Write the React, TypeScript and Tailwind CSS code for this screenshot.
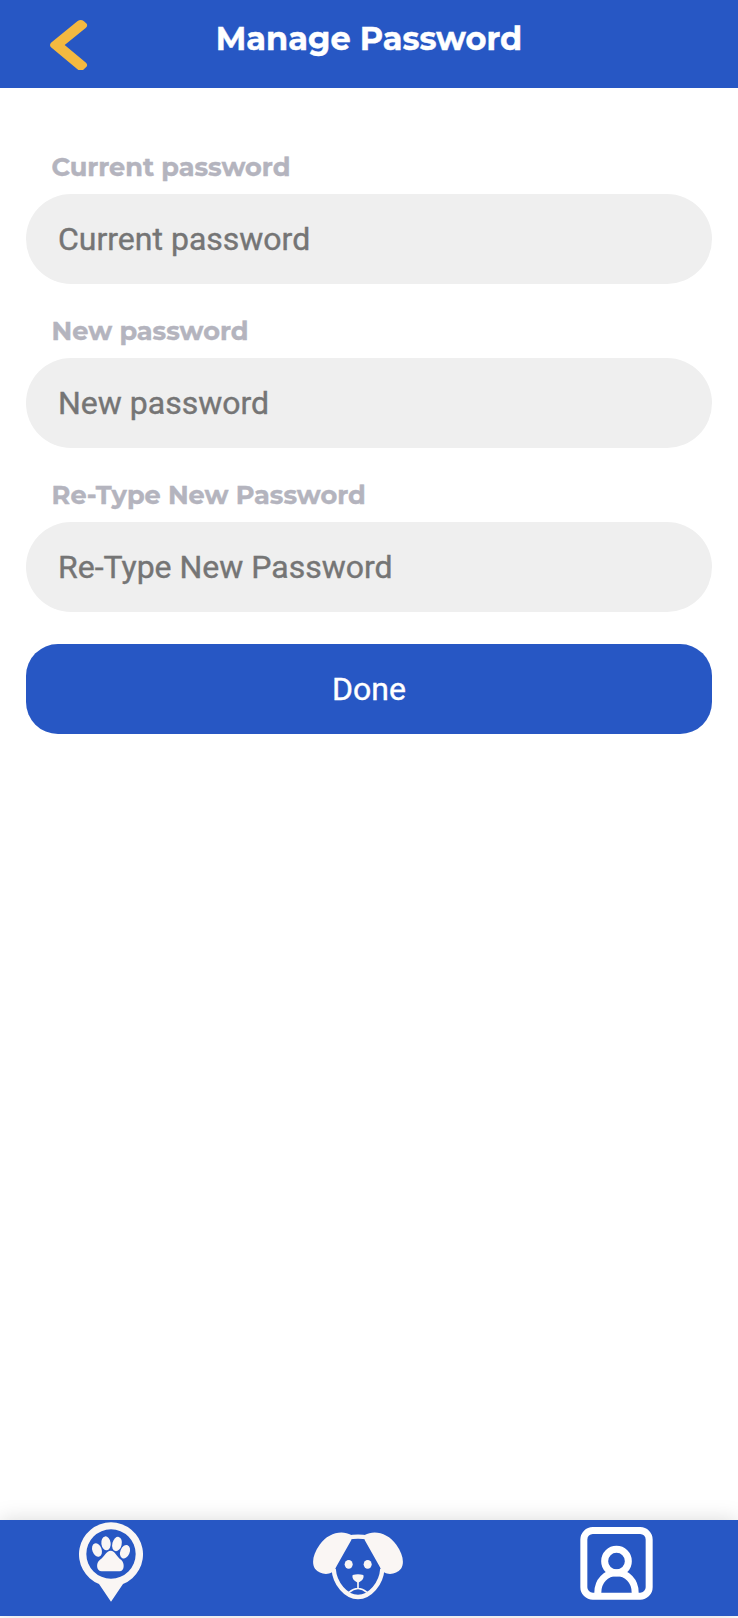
import React from "react";

const fields = ["Current password", "New password", "Re-Type New Password"];

function BackIcon() {
  return (
    <svg className="h-[50px] w-[38px]" viewBox="150 60 114 150" fill="none">
      <path d="M233 63 Q243 57 252 64 L260 71 Q264 77 257 84 L194 135 L258 188 Q265 195 258 202 L249 210 L235 210 L153 142 Q147 135 153 128 Z" fill="#f4b940" />
    </svg>
  );
}

function PawPin() {
  return (
    <svg className="h-20 w-16" viewBox="57 65 192 240" fill="#faf6f4">
      <path fillRule="evenodd" d="M153 66 A96 96 0 0 1 189 251 L153 304 L117 251 A96 96 0 0 1 153 66 Z M153 87 A74 74 0 1 0 153 235 A74 74 0 1 0 153 87 Z" />
      <ellipse cx="111" cy="149" rx="14" ry="21" transform="rotate(-20 111 149)" />
      <ellipse cx="138" cy="129" rx="14" ry="21" transform="rotate(-8 138 129)" />
      <ellipse cx="171" cy="131" rx="14" ry="22" transform="rotate(14 171 131)" />
      <ellipse cx="195" cy="154" rx="14" ry="21" transform="rotate(22 195 154)" />
      <path d="M152 151 C165 151 170 169 184 179 C195 189 193 213 179 213 H125 C110 213 106 189 120 178 C134 168 139 151 152 151 Z" />
    </svg>
  );
}

function DogFace() {
  return (
    <svg className="h-[68px] w-[90px]" viewBox="39 95 270 204" fill="#faf6f4">
      <path d="M154 104 C125 87 83 98 59 133 C39 161 34 188 45 205 C57 219 78 226 96 216 C102 212 106 205 110 197 L154 119 Z" />
      <path d="M194 104 C223 87 265 98 289 133 C309 161 314 188 303 205 C291 219 270 226 252 216 C246 212 242 205 238 197 L194 119 Z" />
      <path d="M143 112 Q174 106 205 112 M101 206 C104 250 138 290 174 290 C210 290 244 250 247 206" fill="none" stroke="#faf6f4" strokeWidth="13" />
      <ellipse cx="146" cy="192" rx="12" ry="13" />
      <ellipse cx="203" cy="192" rx="12" ry="13" />
      <path d="M158 224 Q174 219 190 224 Q193 234 184 241 Q178 246 174 247 Q170 246 164 241 Q155 234 158 224 Z" />
      <path d="M174 244 V264 M147 276 Q174 253 201 276" fill="none" stroke="#faf6f4" strokeWidth="5" />
    </svg>
  );
}

function ProfileIcon() {
  return (
    <svg className="h-[73px] w-[73px]" viewBox="59.5 80.5 219 219" fill="none" stroke="#fff" strokeWidth="21">
      <rect x="71" y="91" width="196" height="197" rx="27" />
      <circle cx="169" cy="183" r="35.5" />
      <path d="M113 288 V277 C113 243 137 218 169 218 C201 218 225 243 225 277 V288" />
    </svg>
  );
}

export default function App() {
  return (
    <div className="flex h-[1618px] w-[738px] flex-col bg-white font-[Roboto,sans-serif]">
      <header className="grid h-[88px] shrink-0 grid-cols-[217px_304px_1fr] bg-[#2757c4]">
        <button className="flex items-start pl-[50px] pt-5" aria-label="Back">
          <BackIcon />
        </button>
        <h1 className="flex justify-center whitespace-nowrap pt-[15px] font-[Montserrat,Inter,sans-serif] text-[32px] font-bold leading-[48px] text-white [-webkit-text-stroke:0.4px]">
          Manage Password
        </h1>
      </header>
      <main className="flex flex-1 flex-col px-[26px] pt-[50px]">
        {fields.map((name) => (
          <label key={name} className="mb-[18px] flex flex-col last-of-type:mb-8">
            <span className="flex h-14 items-center whitespace-nowrap pl-[25.6px] pt-[3px] font-[Montserrat,Inter,sans-serif] text-[25.6px] font-bold text-[#b4b4be] [-webkit-text-stroke:0.4px]">
              {name}
            </span>
            <input
              placeholder={name}
              className="h-[90px] w-full rounded-[45px] bg-[#efefef] px-8 text-[32px] outline-none [-webkit-text-stroke:0.4px] placeholder:text-[#757575]"
            />
          </label>
        ))}
        <button className="h-[90px] rounded-[32px] bg-[#2757c4] text-[32px] text-white [-webkit-text-stroke:0.4px]">Done</button>
      </main>
      <nav className="mb-[2px] flex h-24 shrink-0 items-start bg-[#2757c4] pl-[79px] shadow-[0_0_20px_rgba(0,0,0,0.15)]">
        <a className="mr-[170px] pt-[2px]"><PawPin /></a>
        <a className="mr-[177px] pt-[12px]"><DogFace /></a>
        <a className="pt-[7px]"><ProfileIcon /></a>
      </nav>
    </div>
  );
}
